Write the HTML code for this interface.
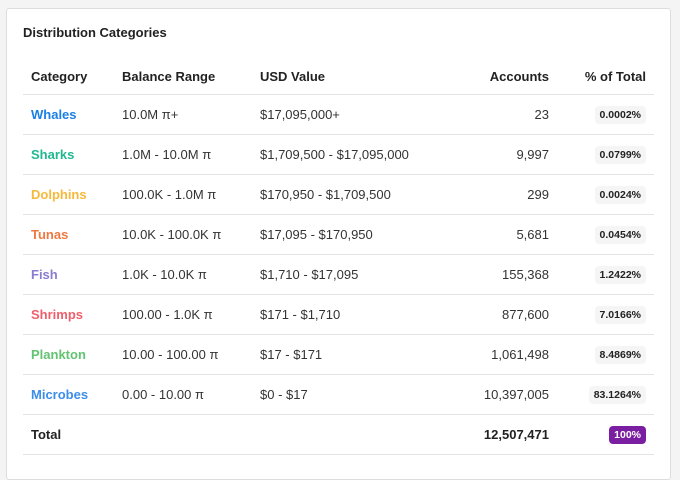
<!DOCTYPE html>
<html><head><style>
body{margin:0;background:#f4f4f4;font-family:"Liberation Sans",sans-serif;width:680px;height:465px;overflow:hidden;position:relative}
.card{position:absolute;left:6px;top:8px;width:663px;height:470px;background:#fff;border:1px solid #ddd;border-radius:3px}
h3{position:absolute;left:16px;top:16px;margin:0;font-size:13px;font-weight:bold;color:#222}
table{position:absolute;left:16px;top:50px;width:631px;border-collapse:collapse;font-size:13px;color:#333}
td,th{height:39px;border-bottom:1px solid #e3e3e3;padding:0 8px;text-align:left;white-space:nowrap}
th{font-weight:bold;color:#222;height:35px}
.r{text-align:right}
.a{padding-right:9px}
td.c{font-weight:bold}
.b{display:inline-block;background:#f5f5f5;font-size:10.5px;font-weight:bold;color:#222;padding:3px 5px;border-radius:4px}
.p{background:#7b1fa2;color:#fff}
</style></head><body>
<div class="card">
<h3>Distribution Categories</h3>
<table>
<tr><th style="width:75px">Category</th><th style="width:122px">Balance Range</th><th>USD Value</th><th class="r a">Accounts</th><th class="r" style="width:80px">% of Total</th></tr>
<tr><td class="c" style="color:#1a80e6">Whales</td><td>10.0M π+</td><td>$17,095,000+</td><td class="r a">23</td><td class="r"><span class="b">0.0002%</span></td></tr>
<tr><td class="c" style="color:#20b890">Sharks</td><td>1.0M - 10.0M π</td><td>$1,709,500 - $17,095,000</td><td class="r a">9,997</td><td class="r"><span class="b">0.0799%</span></td></tr>
<tr><td class="c" style="color:#f6b93b">Dolphins</td><td>100.0K - 1.0M π</td><td>$170,950 - $1,709,500</td><td class="r a">299</td><td class="r"><span class="b">0.0024%</span></td></tr>
<tr><td class="c" style="color:#f07840">Tunas</td><td>10.0K - 100.0K π</td><td>$17,095 - $170,950</td><td class="r a">5,681</td><td class="r"><span class="b">0.0454%</span></td></tr>
<tr><td class="c" style="color:#8a7dd0">Fish</td><td>1.0K - 10.0K π</td><td>$1,710 - $17,095</td><td class="r a">155,368</td><td class="r"><span class="b">1.2422%</span></td></tr>
<tr><td class="c" style="color:#ef5f6a">Shrimps</td><td>100.00 - 1.0K π</td><td>$171 - $1,710</td><td class="r a">877,600</td><td class="r"><span class="b">7.0166%</span></td></tr>
<tr><td class="c" style="color:#62c370">Plankton</td><td>10.00 - 100.00 π</td><td>$17 - $171</td><td class="r a">1,061,498</td><td class="r"><span class="b">8.4869%</span></td></tr>
<tr><td class="c" style="color:#3d8ee8">Microbes</td><td>0.00 - 10.00 π</td><td>$0 - $17</td><td class="r a">10,397,005</td><td class="r"><span class="b">83.1264%</span></td></tr>
<tr><td class="c" style="color:#222">Total</td><td></td><td></td><td class="r a" style="font-weight:bold;color:#222">12,507,471</td><td class="r"><span class="b p">100%</span></td></tr>
</table>
</div>
</body></html>
